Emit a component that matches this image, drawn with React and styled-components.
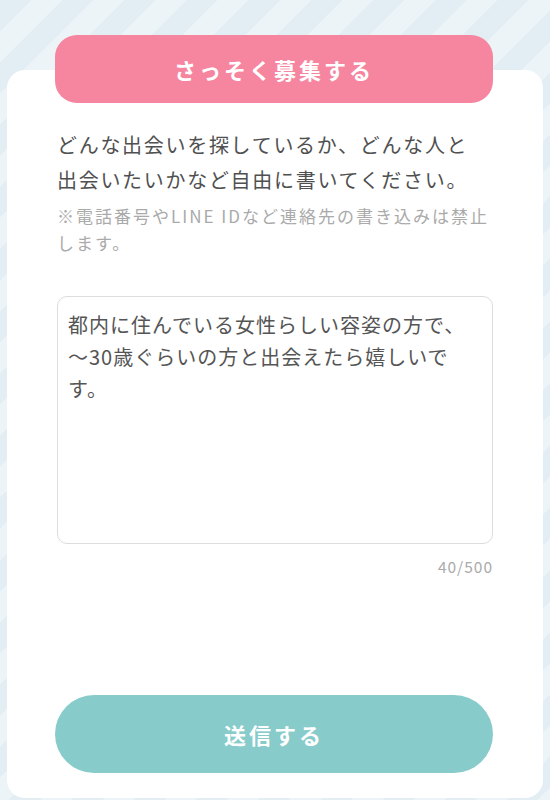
import styled, { createGlobalStyle } from "styled-components";

const GlobalStyle = createGlobalStyle`
  * {
    box-sizing: border-box;
  }
  body {
    margin: 0;
    font-family: "Noto Sans CJK JP", "Noto Sans", sans-serif;
    overflow: hidden;
  }
`;

const Page = styled.div`
  width: 550px;
  height: 800px;
  padding: 70px 7px 2px;
  background: repeating-linear-gradient(
    135deg,
    #e3eef4 0px,
    #e3eef4 22px,
    #edf4f7 22px,
    #edf4f7 44px
  );
`;

const Card = styled.div`
  height: 100%;
  background-color: #fff;
  border-radius: 18px;
  padding: 0 50px 25px;
  display: flex;
  flex-direction: column;
`;

const Button = styled.button`
  display: block;
  width: 438px;
  margin-left: -2px;
  border: none;
  color: #fff;
  font-family: inherit;
  font-weight: 700;
  cursor: pointer;
  height: ${(p) => p.$height}px;
  border-radius: ${(p) => p.$radius}px;
  background-color: ${(p) => p.$color};
  font-size: ${(p) => p.$size}px;
  letter-spacing: ${(p) => p.$spacing}px;
`;

const TopButton = styled(Button)`
  margin-top: -35px;
`;

const SubmitButton = styled(Button)`
  margin-top: auto;
`;

const Lead = styled.p`
  margin: 24px 0 0;
  font-size: 20px;
  line-height: 35px;
  letter-spacing: 1.7px;
  color: #505050;
  white-space: nowrap;
`;

const Note = styled.p`
  margin: 5px 0 0;
  font-size: 17px;
  line-height: 27px;
  letter-spacing: 2px;
  color: #aaa;
  white-space: nowrap;
`;

const TextArea = styled.textarea`
  display: block;
  width: 100%;
  height: 248px;
  margin-top: 40px;
  padding: 12px 20px 12px 10px;
  border: 1px solid #ddd;
  border-radius: 10px;
  resize: none;
  outline: none;
  overflow: hidden;
  font-family: inherit;
  font-size: 20px;
  line-height: 32px;
  letter-spacing: 1px;
  color: #555;
`;

const Counter = styled.div`
  margin-top: 12px;
  text-align: right;
  font-size: 15.5px;
  line-height: 20px;
  color: #aaa;
  letter-spacing: 1px;
`;

const App = () => {
  const text =
    "都内に住んでいる女性らしい容姿の方で、～30歳ぐらいの方と出会えたら嬉しいです。";

  return (
    <>
      <GlobalStyle />
      <Page>
        <Card>
          <TopButton $height={68} $radius={22} $color="#f6869f" $size={22} $spacing={3}>
            さっそく募集する
          </TopButton>
          <Lead>
            どんな出会いを探しているか、どんな人と
            <br />
            出会いたいかなど自由に書いてください。
          </Lead>
          <Note>
            ※電話番号やLINE IDなど連絡先の書き込みは禁止
            <br />
            します。
          </Note>
          <TextArea defaultValue={text} />
          <Counter>{text.length}/500</Counter>
          <SubmitButton $height={78} $radius={39} $color="#88cbcb" $size={22} $spacing={3}>
            送信する
          </SubmitButton>
        </Card>
      </Page>
    </>
  );
};

export default App;
